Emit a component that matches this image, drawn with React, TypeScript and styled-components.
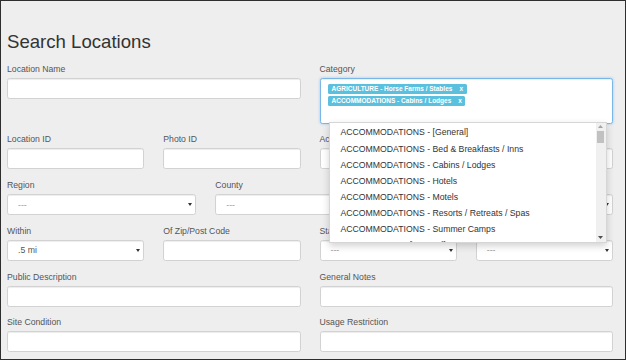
import React from "react";
import styled, { createGlobalStyle } from "styled-components";

const GlobalStyle = createGlobalStyle`
  html, body { margin: 0; padding: 0; background: #eeeeee; }
  *, *::before, *::after { box-sizing: border-box; }
`;

const Frame = styled.div`
  width: 626px;
  height: 360px;
  border: 1px solid #2e2e2e;
  background: #eeeeee;
  padding: 31.3px 12px 0 6px;
  overflow: hidden;
  font-family: "Liberation Sans", Arial, sans-serif;
  color: #333;
`;

const Title = styled.h2`
  margin: 0 0 10px;
  font-size: 18.6px;
  line-height: 1.1;
  font-weight: 400;
  color: #333;
`;

const FormGrid = styled.div`
  display: grid;
  grid-template-columns: repeat(12, minmax(0, 1fr));
  column-gap: 19px;
  row-gap: 9.7px;
  align-items: start;
`;

const Field = styled.div<{ $span: number }>`
  grid-column: span ${(p) => p.$span};
  min-width: 0;
`;

const Label = styled.label`
  display: block;
  font-size: 8.7px;
  line-height: 12px;
  margin-bottom: 3px;
  color: #555;
  white-space: nowrap;
`;

const TextInput = styled.input`
  display: block;
  width: 100%;
  height: 21px;
  margin: 0;
  padding: 0 7px;
  border: 1px solid #d2d2d2;
  border-radius: 2.5px;
  background: #fff;
  box-shadow: inset 0 1px 1px rgba(0, 0, 0, 0.075);
  font-family: inherit;
  font-size: 8.7px;
  color: #555;
  outline: none;
`;

const SelectBox = styled.div`
  display: flex;
  align-items: center;
  justify-content: space-between;
  height: 21px;
  padding: 0 3px 0 10px;
  border: 1px solid #d2d2d2;
  border-radius: 2.5px;
  background: #fff;
  box-shadow: inset 0 1px 1px rgba(0, 0, 0, 0.075);
  font-size: 8.7px;
`;

const SelectValue = styled.span<{ $muted?: boolean }>`
  color: ${(p) => (p.$muted ? "#9a9a9a" : "#555")};
  white-space: nowrap;
`;

const CategoryBox = styled.div`
  position: relative;
  height: 46px;
  padding: 5px 7px;
  border: 1px solid #7ab6e6;
  border-radius: 2.5px;
  background: #fff;
  box-shadow: inset 0 1px 1px rgba(0, 0, 0, 0.075), 0 0 3px rgba(102, 175, 233, 0.6);
  display: flex;
  flex-direction: column;
  align-items: flex-start;
  gap: 2.4px;
`;

const Tag = styled.span`
  display: inline-flex;
  align-items: center;
  height: 10px;
  padding: 0 3.5px 0 4px;
  border-radius: 1.5px;
  background: #5bc0de;
  color: #fff;
  font-size: 6.5px;
  line-height: 10px;
  font-weight: 700;
  white-space: nowrap;
`;

const TagRemove = styled.span`
  margin-left: 7px;
`;

const Dropdown = styled.div`
  position: absolute;
  left: 8px;
  top: 43px;
  width: 278px;
  height: 121px;
  z-index: 10;
  display: flex;
  background: #fff;
  border: 1px solid rgba(0, 0, 0, 0.16);
  box-shadow: 0 3px 7px rgba(0, 0, 0, 0.18);
`;

const OptionList = styled.ul`
  flex: 1;
  margin: 0;
  padding: 1.7px 0 0;
  list-style: none;
  overflow: hidden;
`;

const Option = styled.li`
  height: 16.1px;
  line-height: 16.1px;
  padding-left: 11px;
  font-size: 8.7px;
  color: #333;
  white-space: nowrap;
`;

const Scrollbar = styled.div`
  width: 10px;
  display: flex;
  flex-direction: column;
  background: #f0f0f0;
`;

const ScrollArrow = styled.div<{ $h: number }>`
  height: ${(p) => p.$h}px;
  display: flex;
  align-items: center;
  justify-content: center;
`;

const Thumb = styled.div`
  height: 11.6px;
  margin: 1.7px 1.2px 0;
  background: #c1c1c1;
`;

const ScrollSpacer = styled.div`
  flex: 1;
`;

const Caret = () => (
  <svg width="4" height="3" viewBox="0 0 4 3">
    <polygon points="0,0 4,0 2,3" fill="#333" />
  </svg>
);

const ArrowUp = () => (
  <svg width="5" height="3" viewBox="0 0 5 3">
    <polygon points="0,3 5,3 2.5,0" fill="#a3a3a3" />
  </svg>
);

const ArrowDown = () => (
  <svg width="5" height="3" viewBox="0 0 5 3">
    <polygon points="0,0 5,0 2.5,3" fill="#505050" />
  </svg>
);

const options = [
  "ACCOMMODATIONS - [General]",
  "ACCOMMODATIONS - Bed & Breakfasts / Inns",
  "ACCOMMODATIONS - Cabins / Lodges",
  "ACCOMMODATIONS - Hotels",
  "ACCOMMODATIONS - Motels",
  "ACCOMMODATIONS - Resorts / Retreats / Spas",
  "ACCOMMODATIONS - Summer Camps",
  "AGRICULTURE - [General]",
  "AGRICULTURE - Farms",
];

const tags = ["AGRICULTURE - Horse Farms / Stables", "ACCOMMODATIONS - Cabins / Lodges"];

const Select = ({ value, muted }: { value: string; muted?: boolean }) => (
  <SelectBox>
    <SelectValue $muted={muted}>{value}</SelectValue>
    <Caret />
  </SelectBox>
);

const InputField = ({ label, span }: { label: string; span: number }) => (
  <Field $span={span}>
    <Label>{label}</Label>
    <TextInput type="text" />
  </Field>
);

const SelectField = ({ label, span, value, muted }: { label: string; span: number; value: string; muted?: boolean }) => (
  <Field $span={span}>
    <Label>{label}</Label>
    <Select value={value} muted={muted} />
  </Field>
);

export default function App() {
  return (
    <>
      <GlobalStyle />
      <Frame>
        <Title>Search Locations</Title>
        <FormGrid>
          <InputField label="Location Name" span={6} />
          <Field $span={6}>
            <Label>Category</Label>
            <CategoryBox>
              {tags.map((t) => (
                <Tag key={t}>
                  {t}
                  <TagRemove>x</TagRemove>
                </Tag>
              ))}
              <Dropdown>
                <OptionList>
                  {options.map((o) => (
                    <Option key={o}>{o}</Option>
                  ))}
                </OptionList>
                <Scrollbar>
                  <ScrollArrow $h={7}>
                    <ArrowUp />
                  </ScrollArrow>
                  <Thumb />
                  <ScrollSpacer />
                  <ScrollArrow $h={8.5}>
                    <ArrowDown />
                  </ScrollArrow>
                </Scrollbar>
              </Dropdown>
            </CategoryBox>
          </Field>

          <InputField label="Location ID" span={3} />
          <InputField label="Photo ID" span={3} />
          <InputField label="Activities" span={6} />

          <SelectField label="Region" span={4} value="---" muted />
          <SelectField label="County" span={4} value="---" muted />
          <SelectField label="City" span={4} value="---" muted />

          <SelectField label="Within" span={3} value=".5 mi" />
          <InputField label="Of Zip/Post Code" span={3} />
          <SelectField label="State" span={3} value="---" muted />
          <SelectField label="Country" span={3} value="---" muted />

          <InputField label="Public Description" span={6} />
          <InputField label="General Notes" span={6} />

          <InputField label="Site Condition" span={6} />
          <InputField label="Usage Restriction" span={6} />
        </FormGrid>
      </Frame>
    </>
  );
}
